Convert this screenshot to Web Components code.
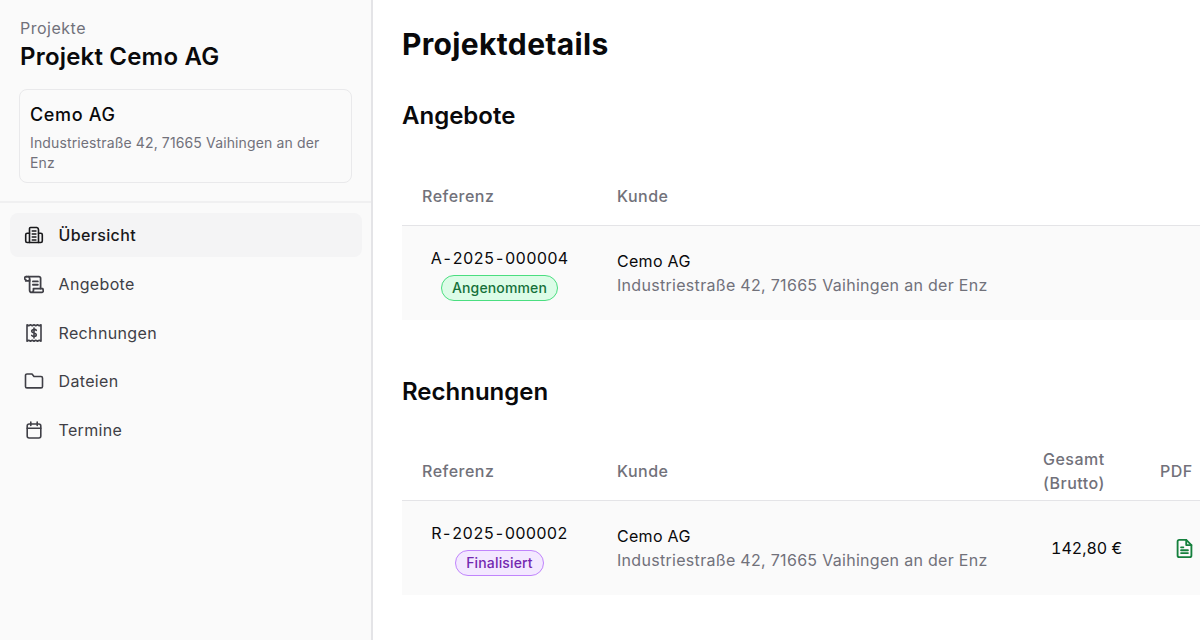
<!DOCTYPE html>
<html lang="de">
<head>
<meta charset="utf-8">
<title>Projektdetails</title>
<style>
  html, body { margin: 0; height: 100%; overflow: hidden; background: #fff; }
  body { font-family: Inter, "Noto Sans", sans-serif; color: #09090b; }
</style>
</head>
<body>
<app-shell>
  <project-sidebar slot="side" parent="Projekte" title-text="Projekt Cemo AG">
    <customer-card name="Cemo AG" address="Industriestraße 42, 71665 Vaihingen an der Enz" slot="card"></customer-card>
    <nav-item icon="overview" active>Übersicht</nav-item>
    <nav-item icon="scroll">Angebote</nav-item>
    <nav-item icon="receipt">Rechnungen</nav-item>
    <nav-item icon="folder">Dateien</nav-item>
    <nav-item icon="calendar">Termine</nav-item>
  </project-sidebar>
  <h-title level="1">Projektdetails</h-title>
  <h-title level="2">Angebote</h-title>
  <doc-section>
    <doc-row reference="A-2025-000004" status="Angenommen" tone="green" name="Cemo AG" address="Industriestraße 42, 71665 Vaihingen an der Enz"></doc-row>
  </doc-section>
  <h-title level="2" class="second">Rechnungen</h-title>
  <doc-section totals>
    <doc-row reference="R-2025-000002" status="Finalisiert" tone="purple" name="Cemo AG" address="Industriestraße 42, 71665 Vaihingen an der Enz" total="142,80 €"></doc-row>
  </doc-section>
</app-shell>

<script>
  const ICONS = {
    overview: '<path d="M5.5 17.5V3.5a1 1 0 0 1 1-1h6.3a2.2 2.2 0 0 1 1.7 2.2V17.5"/><path d="M5.500 8.300H3.200A1.500 1.500 0 0 0 1.700 9.800v6.200a1.500 1.500 0 0 0 1.500 1.500h13.600a1.500 1.500 0 0 0 1.500-1.500V9.800a1.500 1.500 0 0 0-1.500-1.500h-2.300"/><path d="M8.300 6h3.600M8.300 9h3.600M8.300 12h3.600M8.300 15h3.600"/>',
    scroll: '<g transform="translate(-1 -.8) scale(1.1)"><path d="M3 3.200h11.500A1.500 1.500 0 0 1 16 4.700V14"/><path d="M3 3.200A1.300 1.300 0 0 0 2.500 5.800V7H6V4.500A1.300 1.300 0 0 0 4.700 3.200"/><path d="M6 6v9.500a2 2 0 0 0 2 2h9a1.500 1.500 0 0 0 1.300-2.200l-.3-1.300H9.500v1.500a2 2 0 0 1-2 2"/><path d="M9 7.500h4.500M9 10.500h4.500"/></g>',
    receipt: '<path d="M3 1.800v16.400l1.750-1 1.750 1 1.750-1 1.750 1 1.750-1 1.750 1 1.750-1 1.750 1V1.800l-1.750 1-1.750-1-1.750 1-1.750-1-1.750 1-1.750-1-1.750 1z"/><path d="M12.300 7.400A2 1.700 0 0 0 10 6.500c-1.300 0-2.300.7-2.300 1.700 0 2.300 4.600 1.200 4.600 3.500 0 1-1 1.700-2.300 1.700a2.300 1.700 0 0 1-2.300-1M10 5v9.900"/>',
    folder: '<path d="M3 16.900h14a1.500 1.500 0 0 0 1.500-1.500V7A1.500 1.500 0 0 0 17 5.500H10L8 3H3a1.500 1.500 0 0 0-1.500 1.500v10.900A1.500 1.500 0 0 0 3 16.900z"/>',
    calendar: '<rect x="3.200" y="4" width="13.600" height="14" rx="2"/><path d="M3.200 8.200h13.600M6.800 2v3.500M13.200 2v3.500"/>'
  }

  const COLUMNS = '195px 1fr 117px 40px'

  class AppShell extends HTMLElement {
    constructor() {
      super()
      this.attachShadow({ mode: 'open' })
      this.shadowRoot.innerHTML = `
      <style>
        :host { display: grid; grid-template-columns: 373px 1fr; height: 640px; overflow: hidden; }
        .side { background: #fafafa; border-right: 2px solid #e4e4e7; box-sizing: border-box; width: 373px; }
        main { padding: 0 0 0 29px; min-width: 0; overflow: hidden; }
      </style>
      <div class="side"><slot name="side"></slot></div>
      <main><slot></slot></main>`
    }
  }

  class ProjectSidebar extends HTMLElement {
    constructor() {
      super()
      this.attachShadow({ mode: 'open' })
      this.shadowRoot.innerHTML = `
      <style>
        :host { display: block; }
        header { padding: 16px 20px 18px; border-bottom: 2px solid #f0f0f1; }
        .parent { font-size: 16px; line-height: 24px; color: #71717a; letter-spacing: .5px; }
        h2 { margin: 1px 0 16px; font-size: 24px; line-height: 32px; font-weight: 600; color: #09090b; letter-spacing: .2px; }
        nav { display: flex; flex-direction: column; gap: 4.75px; padding: 10px 9px 10px 10px; }
      </style>
      <header>
        <div class="parent"></div>
        <h2></h2>
        <slot name="card"></slot>
      </header>
      <nav><slot></slot></nav>`
      this.shadowRoot.querySelector('.parent').textContent = this.getAttribute('parent')
      this.shadowRoot.querySelector('h2').textContent = this.getAttribute('title-text')
    }
  }

  class CustomerCard extends HTMLElement {
    constructor() {
      super()
      this.attachShadow({ mode: 'open' })
      this.shadowRoot.innerHTML = `
      <style>
        :host { display: block; margin-right: -1px; margin-left: -1px; border: 1px solid #e9e9eb; border-radius: 8px; padding: 11px 10px 10px; background: #fafafa; }
        .name { font-size: 18px; line-height: 28px; font-weight: 500; color: #09090b; letter-spacing: .65px; }
        .addr { margin-top: 4px; font-size: 14px; line-height: 19.5px; color: #71717a; letter-spacing: .13px; }
      </style>
      <div class="name"></div>
      <div class="addr"></div>`
      this.shadowRoot.querySelector('.name').textContent = this.getAttribute('name')
      this.shadowRoot.querySelector('.addr').textContent = this.getAttribute('address')
    }
  }

  class NavItem extends HTMLElement {
    constructor() {
      super()
      this.attachShadow({ mode: 'open' })
      const icon = ICONS[this.getAttribute('icon')] || ''
      this.shadowRoot.innerHTML = `
      <style>
        :host { display: flex; align-items: center; gap: 14.5px; height: 44px; padding: 0 14px; border-radius: 8px; font-size: 16px; color: #3f3f46; letter-spacing: .35px; }
        :host([active]) { background: #f4f4f5; color: #18181b; font-weight: 500; }
        svg { width: 20px; height: 20px; fill: none; stroke: currentColor; stroke-width: 1.6; stroke-linecap: round; stroke-linejoin: round; flex: none; }
      </style>
      <svg viewBox="0 0 20 20">${icon}</svg>
      <slot></slot>`
    }
  }

  class HTitle extends HTMLElement {
    constructor() {
      super()
      this.attachShadow({ mode: 'open' })
      this.shadowRoot.innerHTML = `
      <style>
        :host { display: block; color: #09090b; font-weight: 600; }
        :host([level="1"]) { font-size: 30px; line-height: 36px; padding-top: 26px; font-weight: 700; letter-spacing: .35px; }
        :host([level="2"]) { font-size: 24px; line-height: 32px; padding-top: 38px; }
        :host(.second) { padding-top: 56px; }
      </style>
      <slot></slot>`
    }
  }

  class DocSection extends HTMLElement {
    constructor() {
      super()
      this.attachShadow({ mode: 'open' })
      const extra = this.hasAttribute('totals')
        ? '<div class="th total">Gesamt (Brutto)</div><div class="th pdf">PDF</div>'
        : ''
      this.shadowRoot.innerHTML = `
      <style>
        :host { display: block; margin-top: 33px; }
        :host([totals]) { margin-top: 32px; }
        .head { display: grid; grid-template-columns: ${COLUMNS}; box-sizing: border-box; height: 61px; padding-top: 2px; align-items: center; border-bottom: 1px solid #e4e4e7; width: 798px; font-size: 16px; font-weight: 500; color: #71717a; letter-spacing: .5px; }
        .th { padding-left: 20px; line-height: 24px; }
        .total { width: 76px; padding-left: 0; }
        .pdf { padding-left: 0; }
      </style>
      <div class="head">
        <div class="th">Referenz</div>
        <div class="th">Kunde</div>
        ${extra}
      </div>
      <slot></slot>`
    }
  }

  class StatusBadge extends HTMLElement {
    constructor() {
      super()
      this.attachShadow({ mode: 'open' })
      this.shadowRoot.innerHTML = `
      <style>
        :host { display: inline-block; box-sizing: border-box; height: 26px; line-height: 24px; padding: 0 10px; border-radius: 13px; border: 1px solid; font-size: 14px; font-weight: 500; letter-spacing: .15px; }
        :host([tone="green"]) { background: #dcfce7; border-color: #4ade80; color: #15703a; }
        :host([tone="purple"]) { background: #f3e8ff; border-color: #c084fc; color: #7328b0; }
      </style>
      <slot></slot>`
    }
  }

  class DocRow extends HTMLElement {
    constructor() {
      super()
      this.attachShadow({ mode: 'open' })
      const total = this.getAttribute('total')
      this.shadowRoot.innerHTML = `
      <style>
        :host { display: grid; grid-template-columns: ${COLUMNS}; align-items: center; height: 94px; width: 798px; background: #fafafa; font-size: 16px; color: #09090b; }
        .ref { display: flex; flex-direction: column; align-items: center; gap: 5px; }
        .num { line-height: 24px; font-variant-numeric: tabular-nums; letter-spacing: .15px; }
        .cust { padding-left: 20px; line-height: 24px; letter-spacing: .3px; }
        .addr { color: #71717a; }
        .sum { padding-left: 8px; white-space: nowrap; font-variant-numeric: tabular-nums; }
        .pdf { padding-left: 12.5px; display: flex; }
        svg { width: 23px; height: 23px; flex: none; fill: none; stroke: #15803d; stroke-width: 1.6; stroke-linecap: round; stroke-linejoin: round; }
      </style>
      <div class="ref">
        <span class="num"></span>
        <status-badge></status-badge>
      </div>
      <div class="cust">
        <div class="name"></div>
        <div class="addr"></div>
      </div>
      ${total ? `<div class="sum"></div>
      <div class="pdf"><svg viewBox="0 0 20 20"><path d="M11.5 2.500H5.500A1.500 1.500 0 0 0 4 4v12a1.500 1.500 0 0 0 1.500 1.500h9A1.500 1.500 0 0 0 16 16V7z"/><path d="M11.500 2.500V7H16"/><path d="M7 9h2M7 11.500h6M7 14h6"/></svg></div>` : ''}`
      const s = this.shadowRoot
      s.querySelector('.num').textContent = this.getAttribute('reference')
      const badge = s.querySelector('status-badge')
      badge.setAttribute('tone', this.getAttribute('tone'))
      badge.textContent = this.getAttribute('status')
      s.querySelector('.name').textContent = this.getAttribute('name')
      s.querySelector('.addr').textContent = this.getAttribute('address')
      if (total) s.querySelector('.sum').textContent = total
    }
  }

  customElements.define('status-badge', StatusBadge)
  customElements.define('app-shell', AppShell)
  customElements.define('project-sidebar', ProjectSidebar)
  customElements.define('customer-card', CustomerCard)
  customElements.define('nav-item', NavItem)
  customElements.define('h-title', HTitle)
  customElements.define('doc-section', DocSection)
  customElements.define('doc-row', DocRow)
</script>
</body>
</html>
